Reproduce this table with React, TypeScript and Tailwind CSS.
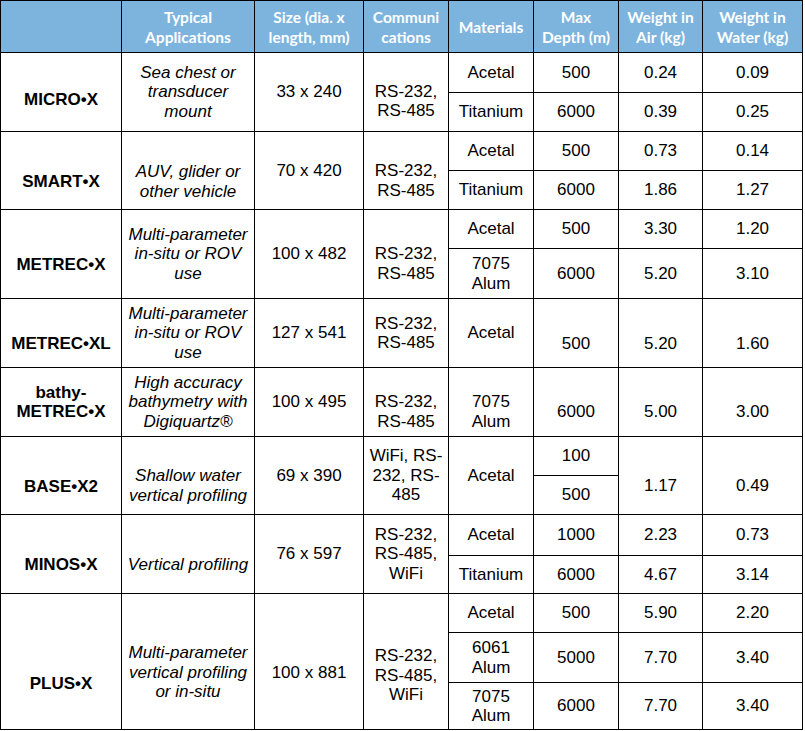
import React from "react";

type CellProps = {
  pos: string;
  children?: React.ReactNode;
  extra?: string;
};

const Cell = ({ pos, children, extra = "" }: CellProps) => (
  <div
    className={`bg-white flex items-center justify-center text-center whitespace-pre-line ${pos} ${extra}`}
  >
    <div>{children}</div>
  </div>
);

const Head = ({ pos, children }: { pos: string; children?: React.ReactNode }) => (
  <div
    className={`bg-[#7db4de] flex items-center justify-center text-center whitespace-pre-line text-white font-bold text-[15.5px] leading-[20px] font-['Lato',sans-serif] ${pos}`}
  >
    <div>{children}</div>
  </div>
);

const Name = ({ pos, children, extra = "" }: CellProps) => (
  <Cell pos={pos} extra={`font-bold ${extra}`}>
    {children}
  </Cell>
);

const App_ = ({ pos, children, extra = "" }: CellProps) => (
  <Cell pos={pos} extra={`italic ${extra}`}>
    {children}
  </Cell>
);

export default function App() {
  return (
    <div className="bg-white w-[805px] h-[731px]">
      <div className="grid w-fit gap-px bg-black p-px grid-cols-[120px_132px_108px_84px_84px_84px_83px_99px] grid-rows-[51px_39px_38px_38px_38px_38px_49px_68px_68px_38px_38px_40px_37px_38px_49px_46px] text-[17px] leading-[19.5px] text-black font-['Liberation_Sans',Arial,sans-serif]">
        {/* Header */}
        <Head pos="col-start-1 row-start-1">{""}</Head>
        <Head pos="col-start-2 row-start-1">{"Typical\nApplications"}</Head>
        <Head pos="col-start-3 row-start-1">{"Size (dia. x\nlength, mm)"}</Head>
        <Head pos="col-start-4 row-start-1">{"Communi\ncations"}</Head>
        <Head pos="col-start-5 row-start-1">{"Materials"}</Head>
        <Head pos="col-start-6 row-start-1">{"Max\nDepth (m)"}</Head>
        <Head pos="col-start-7 row-start-1">{"Weight in\nAir (kg)"}</Head>
        <Head pos="col-start-8 row-start-1">{"Weight in\nWater (kg)"}</Head>

        {/* MICRO•X */}
        <Name pos="col-start-1 row-start-2 row-span-2" extra="pt-[16px]">MICRO•X</Name>
        <App_ pos="col-start-2 row-start-2 row-span-2">{"Sea chest or\ntransducer\nmount"}</App_>
        <Cell pos="col-start-3 row-start-2 row-span-2">33 x 240</Cell>
        <Cell pos="col-start-4 row-start-2 row-span-2" extra="pt-[18px]">{"RS-232,\nRS-485"}</Cell>
        <Cell pos="col-start-5 row-start-2">Acetal</Cell>
        <Cell pos="col-start-5 row-start-3">Titanium</Cell>
        <Cell pos="col-start-6 row-start-2">500</Cell>
        <Cell pos="col-start-6 row-start-3">6000</Cell>
        <Cell pos="col-start-7 row-start-2">0.24</Cell>
        <Cell pos="col-start-7 row-start-3">0.39</Cell>
        <Cell pos="col-start-8 row-start-2">0.09</Cell>
        <Cell pos="col-start-8 row-start-3">0.25</Cell>

        {/* SMART•X */}
        <Name pos="col-start-1 row-start-4 row-span-2" extra="pt-[22px]">SMART•X</Name>
        <App_ pos="col-start-2 row-start-4 row-span-2" extra="pt-[22px]">{"AUV, glider or\nother vehicle"}</App_>
        <Cell pos="col-start-3 row-start-4 row-span-2">70 x 420</Cell>
        <Cell pos="col-start-4 row-start-4 row-span-2" extra="pt-[20px]">{"RS-232,\nRS-485"}</Cell>
        <Cell pos="col-start-5 row-start-4">Acetal</Cell>
        <Cell pos="col-start-5 row-start-5">Titanium</Cell>
        <Cell pos="col-start-6 row-start-4">500</Cell>
        <Cell pos="col-start-6 row-start-5">6000</Cell>
        <Cell pos="col-start-7 row-start-4">0.73</Cell>
        <Cell pos="col-start-7 row-start-5">1.86</Cell>
        <Cell pos="col-start-8 row-start-4">0.14</Cell>
        <Cell pos="col-start-8 row-start-5">1.27</Cell>

        {/* METREC•X */}
        <Name pos="col-start-1 row-start-6 row-span-2" extra="pt-[21px]">METREC•X</Name>
        <App_ pos="col-start-2 row-start-6 row-span-2">{"Multi-parameter\nin-situ or ROV\nuse"}</App_>
        <Cell pos="col-start-3 row-start-6 row-span-2">100 x 482</Cell>
        <Cell pos="col-start-4 row-start-6 row-span-2" extra="pt-[19px]">{"RS-232,\nRS-485"}</Cell>
        <Cell pos="col-start-5 row-start-6">Acetal</Cell>
        <Cell pos="col-start-5 row-start-7">{"7075\nAlum"}</Cell>
        <Cell pos="col-start-6 row-start-6">500</Cell>
        <Cell pos="col-start-6 row-start-7">6000</Cell>
        <Cell pos="col-start-7 row-start-6">3.30</Cell>
        <Cell pos="col-start-7 row-start-7">5.20</Cell>
        <Cell pos="col-start-8 row-start-6">1.20</Cell>
        <Cell pos="col-start-8 row-start-7">3.10</Cell>

        {/* METREC•XL */}
        <Name pos="col-start-1 row-start-8" extra="pt-[21px]">METREC•XL</Name>
        <App_ pos="col-start-2 row-start-8">{"Multi-parameter\nin-situ or ROV\nuse"}</App_>
        <Cell pos="col-start-3 row-start-8">127 x 541</Cell>
        <Cell pos="col-start-4 row-start-8">{"RS-232,\nRS-485"}</Cell>
        <Cell pos="col-start-5 row-start-8">Acetal</Cell>
        <Cell pos="col-start-6 row-start-8" extra="pt-[21px]">500</Cell>
        <Cell pos="col-start-7 row-start-8" extra="pt-[21px]">5.20</Cell>
        <Cell pos="col-start-8 row-start-8" extra="pt-[21px]">1.60</Cell>

        {/* bathy-METREC•X */}
        <Name pos="col-start-1 row-start-9">{"bathy-\nMETREC•X"}</Name>
        <App_ pos="col-start-2 row-start-9">{"High accuracy\nbathymetry with\nDigiquartz®"}</App_>
        <Cell pos="col-start-3 row-start-9">100 x 495</Cell>
        <Cell pos="col-start-4 row-start-9" extra="pt-[19px]">{"RS-232,\nRS-485"}</Cell>
        <Cell pos="col-start-5 row-start-9" extra="pt-[19px]">{"7075\nAlum"}</Cell>
        <Cell pos="col-start-6 row-start-9" extra="pt-[19px]">6000</Cell>
        <Cell pos="col-start-7 row-start-9" extra="pt-[19px]">5.00</Cell>
        <Cell pos="col-start-8 row-start-9" extra="pt-[19px]">3.00</Cell>

        {/* BASE•X2 */}
        <Name pos="col-start-1 row-start-10 row-span-2" extra="pt-[22px]">BASE•X2</Name>
        <App_ pos="col-start-2 row-start-10 row-span-2" extra="pt-[20px]">{"Shallow water\nvertical profiling"}</App_>
        <Cell pos="col-start-3 row-start-10 row-span-2">69 x 390</Cell>
        <Cell pos="col-start-4 row-start-10 row-span-2">{"WiFi, RS-\n232, RS-\n485"}</Cell>
        <Cell pos="col-start-5 row-start-10 row-span-2">Acetal</Cell>
        <Cell pos="col-start-6 row-start-10">100</Cell>
        <Cell pos="col-start-6 row-start-11">500</Cell>
        <Cell pos="col-start-7 row-start-10 row-span-2" extra="pt-[20px]">1.17</Cell>
        <Cell pos="col-start-8 row-start-10 row-span-2" extra="pt-[20px]">0.49</Cell>

        {/* MINOS•X */}
        <Name pos="col-start-1 row-start-12 row-span-2" extra="pt-[21px]">MINOS•X</Name>
        <App_ pos="col-start-2 row-start-12 row-span-2" extra="pt-[21px]">Vertical profiling</App_>
        <Cell pos="col-start-3 row-start-12 row-span-2">76 x 597</Cell>
        <Cell pos="col-start-4 row-start-12 row-span-2">{"RS-232,\nRS-485,\nWiFi"}</Cell>
        <Cell pos="col-start-5 row-start-12">Acetal</Cell>
        <Cell pos="col-start-5 row-start-13">Titanium</Cell>
        <Cell pos="col-start-6 row-start-12">1000</Cell>
        <Cell pos="col-start-6 row-start-13">6000</Cell>
        <Cell pos="col-start-7 row-start-12">2.23</Cell>
        <Cell pos="col-start-7 row-start-13">4.67</Cell>
        <Cell pos="col-start-8 row-start-12">0.73</Cell>
        <Cell pos="col-start-8 row-start-13">3.14</Cell>

        {/* PLUS•X */}
        <Name pos="col-start-1 row-start-14 row-span-3" extra="pt-[44px]">PLUS•X</Name>
        <App_ pos="col-start-2 row-start-14 row-span-3" extra="pt-[22px]">{"Multi-parameter\nvertical profiling\nor in-situ"}</App_>
        <Cell pos="col-start-3 row-start-14 row-span-3" extra="pt-[22px]">100 x 881</Cell>
        <Cell pos="col-start-4 row-start-14 row-span-3" extra="pt-[28px]">{"RS-232,\nRS-485,\nWiFi"}</Cell>
        <Cell pos="col-start-5 row-start-14">Acetal</Cell>
        <Cell pos="col-start-5 row-start-15">{"6061\nAlum"}</Cell>
        <Cell pos="col-start-5 row-start-16">{"7075\nAlum"}</Cell>
        <Cell pos="col-start-6 row-start-14">500</Cell>
        <Cell pos="col-start-6 row-start-15">5000</Cell>
        <Cell pos="col-start-6 row-start-16">6000</Cell>
        <Cell pos="col-start-7 row-start-14">5.90</Cell>
        <Cell pos="col-start-7 row-start-15">7.70</Cell>
        <Cell pos="col-start-7 row-start-16">7.70</Cell>
        <Cell pos="col-start-8 row-start-14">2.20</Cell>
        <Cell pos="col-start-8 row-start-15">3.40</Cell>
        <Cell pos="col-start-8 row-start-16">3.40</Cell>
      </div>
    </div>
  );
}
